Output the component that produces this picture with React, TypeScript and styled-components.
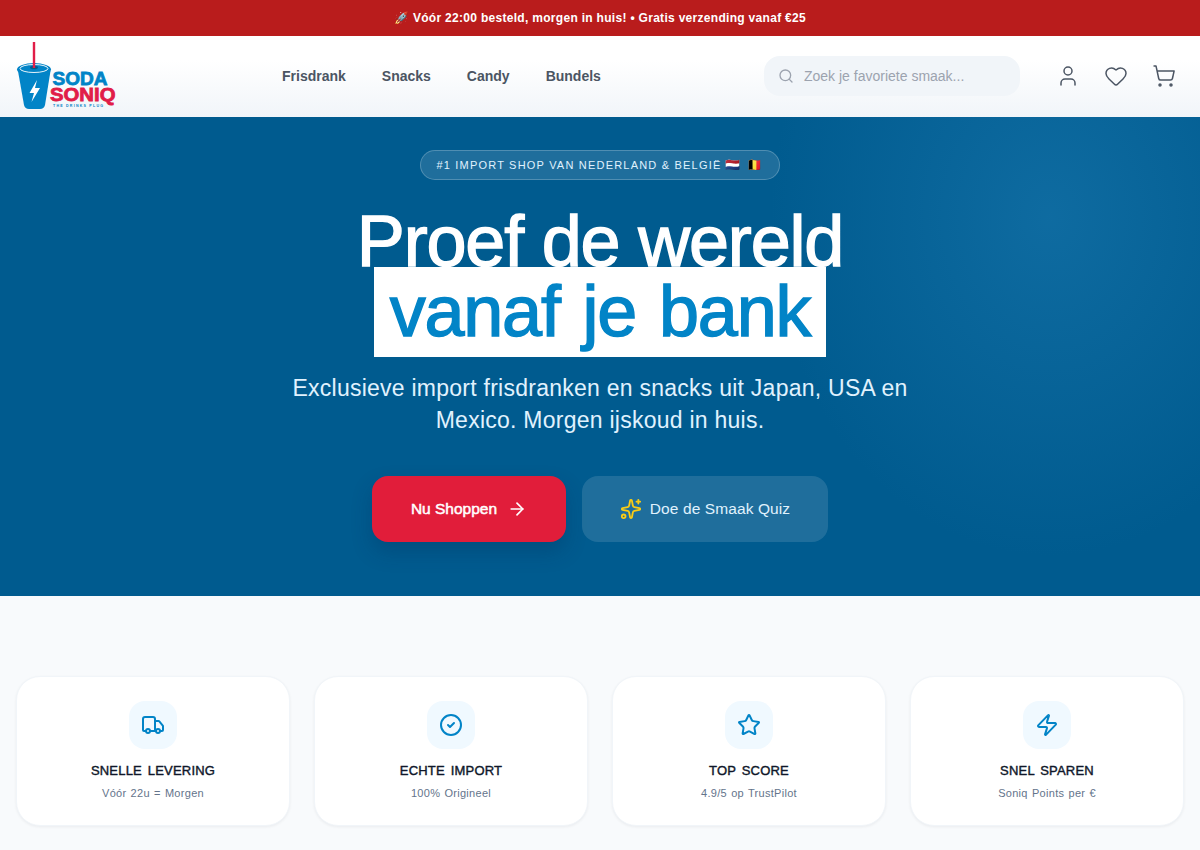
import React from "react";
import styled, { createGlobalStyle } from "styled-components";
import { ArrowRight, CircleCheck, Heart, Search, ShoppingCart, Sparkles, Star, Truck, User, Zap } from "lucide-react";

const Global = createGlobalStyle`
  * { box-sizing: border-box; }
  html, body { margin: 0; padding: 0; background: #f8fafc; }
  body { font-family: "Liberation Sans", Arial, sans-serif; overflow: hidden; }
`;

const Page = styled.div`
  width: 1200px;
  height: 850px;
  overflow: hidden;
  background: #f8fafc;
`;

const Promo = styled.div`
  height: 36px;
  background: #b91c1c;
  color: #fff;
  font-size: 12px;
  font-weight: 700;
  letter-spacing: 0.3px;
  display: flex;
  align-items: center;
  justify-content: center;
`;

const Header = styled.header`
  height: 81px;
  padding: 0 16px 2px;
  background: linear-gradient(180deg, #ffffff 0%, #ffffff 30%, #f1f5f9 100%);
  display: flex;
  align-items: center;
`;

const LogoSvg = styled.svg`
  width: 104px;
  height: 72px;
  flex: none;
`;

const Nav = styled.nav`
  display: flex;
  gap: 36px;
  margin-left: 162px;
`;

const NavLink = styled.a`
  font-size: 14px;
  font-weight: 700;
  color: #4b5563;
`;

const SearchBox = styled.div`
  width: 256px;
  height: 40px;
  margin-left: auto;
  border-radius: 16px;
  background: #f1f5f9;
  display: flex;
  align-items: center;
  padding: 0 14px;
  gap: 10px;
  color: #9ca3af;
  font-size: 14px;
`;

const IconRow = styled.div`
  display: flex;
  align-items: center;
  gap: 24px;
  margin-left: 36px;
  margin-right: 8px;
  color: #4b5563;
`;

const Hero = styled.section`
  height: 479px;
  padding-top: 33px;
  background:
    radial-gradient(ellipse 280px 340px at 1050px 100px, rgba(30, 125, 180, 0.48), rgba(30, 125, 180, 0) 100%),
    #005b8f;
  display: flex;
  flex-direction: column;
  align-items: center;
  color: #fff;
`;

const Badge = styled.div`
  height: 30px;
  width: 360px;
  border-radius: 15px;
  border: 1px solid rgba(255, 255, 255, 0.22);
  background: rgba(255, 255, 255, 0.12);
  color: #e0f2fe;
  font-size: 11px;
  letter-spacing: 1.2px;
  display: flex;
  align-items: center;
  justify-content: center;
  gap: 4px;
  white-space: nowrap;
`;

const Flags = styled.span`
  font-size: 12px;
  letter-spacing: 1.6px;
`;

const Title = styled.h1`
  margin: 25px 0 0;
  font-size: 72px;
  line-height: 72px;
  font-weight: 400;
  text-align: center;
  letter-spacing: -1.2px;
  -webkit-text-stroke: 1.4px currentColor;
`;

const Highlight = styled.span`
  display: block;
  width: 452px;
  height: 90px;
  margin: -10px auto 0;
  background: #fff;
  color: #0284c7;
  line-height: 88px;
  word-spacing: 4px;
`;

const Lead = styled.p`
  margin: 15px 0 0;
  width: 640px;
  font-size: 23px;
  letter-spacing: 0.25px;
  line-height: 32px;
  text-align: center;
  color: #e0f2fe;
`;

const Actions = styled.div`
  display: flex;
  gap: 16px;
  margin-top: 40px;
`;

const PrimaryBtn = styled.button`
  width: 194px;
  height: 66px;
  border: 0;
  border-radius: 16px;
  background: #e11d3a;
  color: #fff;
  font: 400 15.5px "Liberation Sans", Arial, sans-serif;
  -webkit-text-stroke: 0.5px currentColor;
  display: flex;
  align-items: center;
  justify-content: center;
  gap: 10px;
  box-shadow: 0 10px 20px rgba(0, 40, 80, 0.25);
`;

const GhostBtn = styled.button`
  width: 246px;
  height: 66px;
  border: 0;
  border-radius: 16px;
  background: rgba(255, 255, 255, 0.12);
  color: #e0f2fe;
  font: 400 15.5px "Liberation Sans", Arial, sans-serif;
  letter-spacing: 0.1px;
  display: flex;
  align-items: center;
  justify-content: center;
  gap: 8px;
`;

const Features = styled.section`
  padding: 80px 16px 0;
  display: grid;
  grid-template-columns: repeat(4, 1fr);
  gap: 24px;
`;

const Card = styled.article`
  height: 150px;
  border-radius: 24px;
  border: 1px solid #f1f5f9;
  background: #fff;
  box-shadow: 0 1px 3px rgba(15, 23, 42, 0.06);
  display: flex;
  flex-direction: column;
  align-items: center;
  padding-top: 24px;
`;

const CardIcon = styled.div`
  width: 48px;
  height: 48px;
  border-radius: 16px;
  background: #f0f9ff;
  color: #0284c7;
  display: flex;
  align-items: center;
  justify-content: center;
`;

const CardTitle = styled.h3`
  margin: 12px 0 0;
  font-size: 13px;
  line-height: 20px;
  font-weight: 400;
  letter-spacing: 0.2px;
  word-spacing: 2px;
  -webkit-text-stroke: 0.4px currentColor;
  color: #0f172a;
`;

const CardText = styled.p`
  margin: 4px 0 0;
  font-size: 11px;
  line-height: 16px;
  letter-spacing: 0.3px;
  word-spacing: 0.8px;
  color: #64748b;
`;

const Logo = () => (
  <LogoSvg viewBox="0 0 104 72" aria-label="Soda Soniq">
    <path d="M2 31 L8 65 Q9 69 13 69 L24 69 Q28 69 29 65 L34.5 31 Z" fill="#0284c7" />
    <ellipse cx="18" cy="29.5" rx="17" ry="6.5" fill="#0284c7" />
    <ellipse cx="18" cy="28.5" rx="14" ry="4" fill="none" stroke="#fff" strokeWidth="0.9" />
    <ellipse cx="18" cy="27.5" rx="4" ry="1.8" fill="#015a8c" />
    <rect x="16.8" y="2" width="2.4" height="26" fill="#e11d48" />
    <path d="M21 40 L13.5 53 L18 53 L15.5 62 L24 48 L19 48 Z" fill="#fff" />
    <text x="36.5" y="45" fontFamily="Liberation Sans, Arial, sans-serif" fontWeight="700" fontSize="18.5" fill="#0284c7" stroke="#0284c7" strokeWidth="0.8" textLength="55" lengthAdjust="spacingAndGlyphs">SODA</text>
    <text x="34" y="61" fontFamily="Liberation Sans, Arial, sans-serif" fontWeight="700" fontSize="18.5" fill="#e11d48" stroke="#e11d48" strokeWidth="0.8" textLength="65.5" lengthAdjust="spacingAndGlyphs">SONIQ</text>
    <text x="37" y="66.5" fontFamily="Liberation Sans, Arial, sans-serif" fontWeight="700" fontSize="3.6" fill="#0284c7" textLength="50" lengthAdjust="spacing">THE DRINKS PLUG</text>
  </LogoSvg>
);

const features = [
  { icon: <Truck size={24} strokeWidth={2} />, title: "SNELLE LEVERING", text: "Vóór 22u = Morgen" },
  { icon: <CircleCheck size={24} strokeWidth={2} />, title: "ECHTE IMPORT", text: "100% Origineel" },
  { icon: <Star size={24} strokeWidth={2} />, title: "TOP SCORE", text: "4.9/5 op TrustPilot" },
  { icon: <Zap size={24} strokeWidth={2} />, title: "SNEL SPAREN", text: "Soniq Points per €" },
];

export default function App() {
  return (
    <Page>
      <Global />
      <Promo>🚀 Vóór 22:00 besteld, morgen in huis! • Gratis verzending vanaf €25</Promo>
      <Header>
        <Logo />
        <Nav>
          <NavLink>Frisdrank</NavLink>
          <NavLink>Snacks</NavLink>
          <NavLink>Candy</NavLink>
          <NavLink>Bundels</NavLink>
        </Nav>
        <SearchBox>
          <Search size={16} />
          Zoek je favoriete smaak...
        </SearchBox>
        <IconRow>
          <User size={24} strokeWidth={1.5} />
          <Heart size={24} strokeWidth={1.5} />
          <ShoppingCart size={24} strokeWidth={1.5} />
        </IconRow>
      </Header>
      <Hero>
        <Badge>
          #1 IMPORT SHOP VAN NEDERLAND &amp; BELGIË <Flags>🇳🇱 🇧🇪</Flags>
        </Badge>
        <Title>
          Proef de wereld
          <Highlight>vanaf je bank</Highlight>
        </Title>
        <Lead>Exclusieve import frisdranken en snacks uit Japan, USA en Mexico. Morgen ijskoud in huis.</Lead>
        <Actions>
          <PrimaryBtn>
            Nu Shoppen <ArrowRight size={20} />
          </PrimaryBtn>
          <GhostBtn>
            <Sparkles size={22} color="#facc15" /> Doe de Smaak Quiz
          </GhostBtn>
        </Actions>
      </Hero>
      <Features>
        {features.map((f) => (
          <Card key={f.title}>
            <CardIcon>{f.icon}</CardIcon>
            <CardTitle>{f.title}</CardTitle>
            <CardText>{f.text}</CardText>
          </Card>
        ))}
      </Features>
    </Page>
  );
}
